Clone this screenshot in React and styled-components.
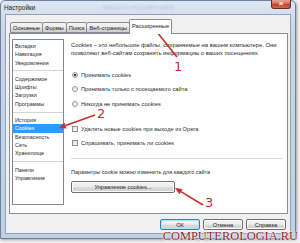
import React from 'react';
import styled, { createGlobalStyle } from 'styled-components';

const TABS = ["Основные", "Формы", "Поиск", "Веб-страницы", "Расширенные"];

const GROUPS = [
  ["Вкладки", "Навигация", "Уведомления"],
  ["Содержимое", "Шрифты", "Загрузки", "Программы"],
  ["История", "Cookies", "Безопасность", "Сеть", "Хранилище"],
  ["Панели", "Управление"],
];

const RADIOS = [
  { label: "Принимать cookies", checked: true },
  { label: "Принимать только с посещаемого сайта" },
  { label: "Никогда не принимать cookies" },
];

const CHECKS = [
  "Удалять новые cookies при выходе из Opera",
  "Спрашивать, принимать ли cookies",
];

function Arrow({ x1, y1, x2, y2 }) {
  const a = Math.atan2(y2 - y1, x2 - x1);
  const len = 7, w = 3;
  const bx = x2 - len * Math.cos(a), by = y2 - len * Math.sin(a);
  const p1 = `${bx + w * Math.sin(a)},${by - w * Math.cos(a)}`;
  const p2 = `${bx - w * Math.sin(a)},${by + w * Math.cos(a)}`;
  return (
    <g>
      <line x1={x1} y1={y1} x2={bx} y2={by} stroke="#cf2a2e" strokeWidth="1.6" />
      <polygon points={`${x2},${y2} ${p1} ${p2}`} fill="#cf2a2e" />
    </g>
  );
}

function App() {
  return (
    <Root>
      <GlobalStyle />
      <Window>
        <TitleBar>
          <Title>Настройки</Title>
          <Ghost>Изменить настройки сайта</Ghost>
          <CloseButton>×</CloseButton>
        </TitleBar>
        <Client>
          <Tabs>
            {TABS.map((t, i) => (
              <Tab key={t} $active={i === TABS.length - 1}>{t}</Tab>
            ))}
          </Tabs>
          <Panel>
            <ListBox>
              {GROUPS.map((group, gi) => (
                <React.Fragment key={gi}>
                  {gi > 0 && <Separator />}
                  {group.map(item => (
                    <ListItem key={item} $selected={item === "Cookies"}>{item}</ListItem>
                  ))}
                </React.Fragment>
              ))}
            </ListBox>
            <Content>
              <Description>
                Cookies – это небольшие файлы, сохраняемые на вашем компьютере. Они{"\n"}
                позволяют веб-сайтам сохранять информацию о ваших посещениях.
              </Description>
              <Options>
                {RADIOS.map(r => (
                  <Option key={r.label}>
                    <Radio $checked={r.checked} />
                    {r.label}
                  </Option>
                ))}
                <CheckGroup>
                  {CHECKS.map(c => (
                    <Option key={c}>
                      <Check />
                      {c}
                    </Option>
                  ))}
                </CheckGroup>
              </Options>
              <Rule />
              <Hint>Параметры cookie можно изменить для каждого сайта</Hint>
              <Button $wide>Управление cookies...</Button>
            </Content>
          </Panel>
          <Footer>
            <Button $default>ОК</Button>
            <Button>Отмена</Button>
            <Button>Справка</Button>
          </Footer>
        </Client>
      </Window>

      <Overlay viewBox="0 0 300 243" width="300" height="243">
        <Arrow x1={177} y1={57} x2={153} y2={27} />
        <Arrow x1={95} y1={115} x2={59} y2={128} />
        <Arrow x1={203} y1={205} x2={175} y2={188} />
      </Overlay>
      <Mark $x={174} $y={61}>1</Mark>
      <Mark $x={97} $y={108}>2</Mark>
      <Mark $x={205} $y={197}>3</Mark>
      <Watermark>COMPUTEROLOGIA.RU</Watermark>
    </Root>
  );
}

const GlobalStyle = createGlobalStyle`
  body {
    margin: 0;
    background: #f3f3f3;
  }
`;

const Root = styled.div`
  position: relative;
  width: 300px;
  height: 243px;
  overflow: hidden;
  background: #f3f3f3;
  font-family: 'Liberation Sans', Arial, sans-serif;
  font-size: 5.7px;
  color: #2b2b2b;
`;

const Window = styled.div`
  width: 296px;
  height: 239px;
  box-sizing: border-box;
  display: flex;
  flex-direction: column;
  border: 1px solid #6f8299;
  border-radius: 5px 5px 0 0;
  background: linear-gradient(180deg, #dce7f3 0%, #c8d7e9 12%, #bfd0e4 100%);
  padding: 0 4px 4px 4px;
  box-shadow: 1px 1px 3px rgba(0, 0, 0, 0.35);
`;

const TitleBar = styled.div`
  height: 13px;
  display: flex;
  align-items: flex-start;
  justify-content: space-between;
`;

const Title = styled.span`
  font-size: 6.4px;
  color: #1b1b1b;
  margin-top: 3px;
  margin-left: -1px;
`;

const Ghost = styled.span`
  margin-top: 3px;
  color: #6d7f96;
  opacity: 0.3;
  filter: blur(0.8px);
  margin-right: 30px;
`;

const CloseButton = styled.div`
  width: 20px;
  height: 9px;
  margin-top: -1px;
  box-sizing: border-box;
  border: 1px solid #6b2a22;
  border-top: none;
  border-radius: 0 0 3px 3px;
  background: linear-gradient(180deg, #e6a797 0%, #d26a55 45%, #c0412d 55%, #cf6a4f 100%);
  color: #fff;
  font-size: 8px;
  line-height: 7px;
  text-align: center;
  font-weight: bold;
`;

const Client = styled.div`
  flex: 1;
  display: flex;
  flex-direction: column;
  background: #f0f0f0;
  border: 1px solid #8fa2ba;
  padding: 4px 2px 0 3px;
`;

const Tabs = styled.div`
  display: flex;
  align-items: flex-end;
  height: 14px;
  padding-left: 1px;
  position: relative;
  z-index: 1;
`;

const Tab = styled.div`
  box-sizing: border-box;
  height: ${p => (p.$active ? 15 : 11)}px;
  line-height: ${p => (p.$active ? 12 : 10)}px;
  margin-bottom: ${p => (p.$active ? -1 : 0)}px;
  padding: 0 2px;
  border: 1px solid #898c95;
  border-bottom: ${p => (p.$active ? 'none' : '1px solid #898c95')};
  margin-right: -1px;
  border-radius: 2px 2px 0 0;
  background: ${p => (p.$active ? '#fff' : 'linear-gradient(180deg, #f3f3f3 0%, #ebebeb 50%, #dddddd 51%, #cfcfcf 100%)')};
  color: #1e1e1e;
  white-space: nowrap;
`;

const Panel = styled.div`
  height: 181px;
  box-sizing: border-box;
  display: flex;
  align-items: flex-start;
  background: #fff;
  border: 1px solid #898c95;
  padding: 5px 4px 0 2px;
`;

const ListBox = styled.div`
  width: 52px;
  height: 166px;
  box-sizing: border-box;
  border: 1px solid #828790;
  padding-top: 2px;
  flex-shrink: 0;
  font-size: 5.4px;
`;

const ListItem = styled.div`
  height: 8.3px;
  line-height: 8.3px;
  padding-left: 2px;
  white-space: nowrap;
  background: ${p => (p.$selected ? '#3399ff' : 'transparent')};
  color: ${p => (p.$selected ? '#fff' : '#2b2b2b')};
`;

const Separator = styled.div`
  height: 1px;
  margin: 3.5px 0;
  background: #d4d4d4;
`;

const Content = styled.div`
  flex: 1;
  margin-left: 7px;
  padding-top: 2px;
  display: flex;
  flex-direction: column;
  align-items: flex-start;
`;

const Description = styled.p`
  margin: 0;
  font-size: 5.85px;
  line-height: 8px;
  white-space: pre-line;
`;

const Options = styled.div`
  margin-top: 11px;
  display: flex;
  flex-direction: column;
`;

const CheckGroup = styled.div`
  margin-top: 10.5px;
  display: flex;
  flex-direction: column;
`;

const Option = styled.div`
  height: 14.3px;
  display: flex;
  align-items: center;
  white-space: nowrap;
`;

const Radio = styled.span`
  width: 6px;
  height: 6px;
  box-sizing: border-box;
  border-radius: 50%;
  border: 1px solid #9a9a9a;
  background: ${p => (p.$checked ? 'radial-gradient(circle, #3a3a3a 0 1.3px, #e8e8e8 1.6px)' : 'linear-gradient(135deg, #e2e2e2, #fafafa)')};
  margin-right: 3px;
  margin-left: 1px;
`;

const Check = styled.span`
  width: 6px;
  height: 6px;
  box-sizing: border-box;
  border: 1px solid #8f8f8f;
  background: linear-gradient(135deg, #dedede, #fbfbfb);
  margin-right: 3px;
  margin-left: 1px;
`;

const Rule = styled.div`
  align-self: stretch;
  height: 1px;
  background: #dcdcdc;
  margin-top: 8px;
`;

const Hint = styled.div`
  margin-top: 9px;
  line-height: 8px;
  font-size: 5.5px;
`;

const Button = styled.div`
  box-sizing: border-box;
  width: ${p => (p.$wide ? 104 : 40)}px;
  height: ${p => (p.$wide ? 12 : 11)}px;
  margin-top: ${p => (p.$wide ? 5 : 0)}px;
  border: 1px solid ${p => (p.$default ? '#3c7fb1' : '#707070')};
  border-radius: 2px;
  background: linear-gradient(180deg, #f4f4f4 0%, #ececec 48%, #dddddd 52%, #cfcfcf 100%);
  display: flex;
  align-items: center;
  justify-content: center;
  color: #1e1e1e;
  white-space: nowrap;
  box-shadow: ${p => (p.$default ? 'inset 0 0 0 1px #aee0f8' : 'inset 0 0 0 1px #fbfbfb')};
`;

const Footer = styled.div`
  display: flex;
  justify-content: flex-end;
  gap: 3px;
  padding: 5px 2px 0 0;
`;

const Overlay = styled.svg`
  position: absolute;
  left: 0;
  top: 0;
  pointer-events: none;
`;

const Mark = styled.span`
  position: absolute;
  left: ${p => p.$x}px;
  top: ${p => p.$y}px;
  font-family: 'DejaVu Sans', sans-serif;
  font-size: 13px;
  line-height: 11px;
  color: #cf2a3a;
`;

const Watermark = styled.div`
  position: absolute;
  right: 2px;
  bottom: 1px;
  font-family: 'Liberation Serif', 'Times New Roman', serif;
  font-size: 12.4px;
  line-height: 12px;
  color: #8e1b2c;
  text-shadow: 0 0 2px #fff, 0 0 2px #fff, 0 0 1px #fff;
`;

export default App;
